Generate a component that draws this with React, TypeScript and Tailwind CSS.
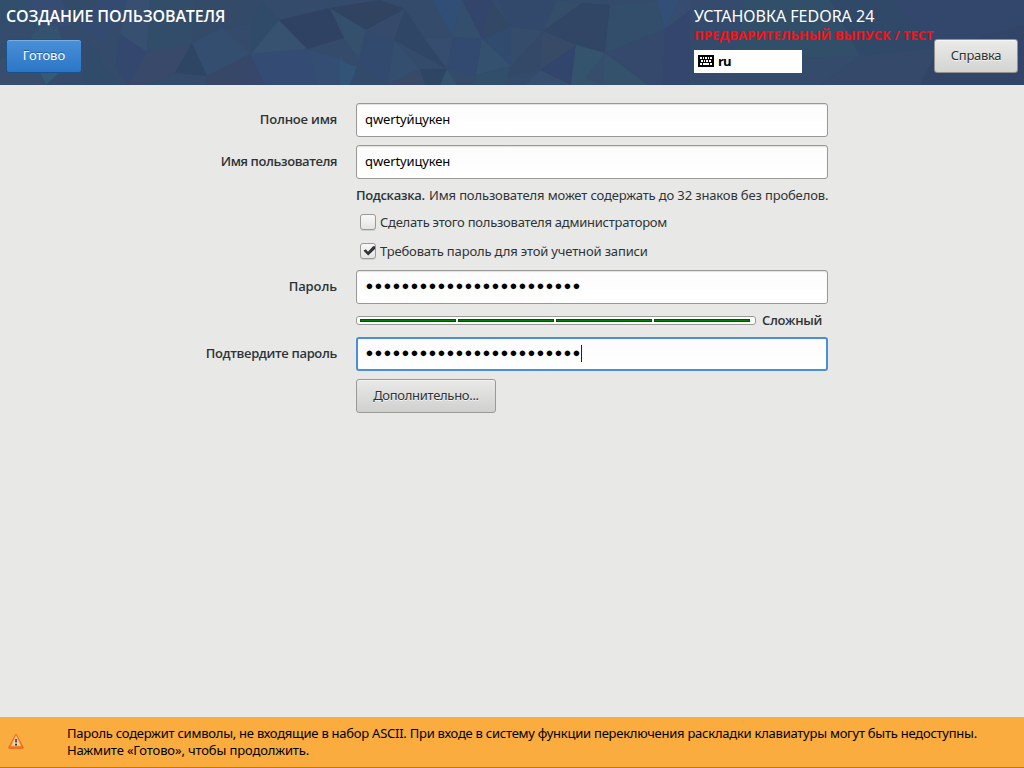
import type { ReactNode } from 'react';

// Facets of the low-poly header artwork: fill colour and polygon points.
const facets: [string, string][] = [
  ['#31506a', '0,0 28,0 40,28 0,18'],
  ['#374d74', '28,0 62,0 74,26 40,28'],
  ['#36556f', '28,28 57,25 62,40 38,52'],
  ['#344e6d', '0,18 40,28 0,60'],
  ['#394f6d', '0,60 40,40 45,85 0,85'],
  ['#345d77', '38,68 60,72 46,85'],
  ['#324c69', '62,0 100,0 74,26'],
  ['#354b73', '100,0 127,0 105,40 74,26'],
  ['#385071', '127,0 150,0 147,52 120,34'],
  ['#314c6a', '88,40 120,85 82,85'],
  ['#34476f', '120,34 147,52 128,85 115,68'],
  ['#324e6a', '150,0 195,0 192,43 147,52'],
  ['#39496a', '147,52 192,43 175,73 150,85 128,85'],
  ['#334b68', '195,0 262,0 250,23 192,43'],
  ['#2e4562', '192,43 207,76 175,73'],
  ['#344f72', '222,28 250,54 207,76 192,43'],
  ['#374768', '207,76 250,54 240,85 205,85'],
  ['#304c6a', '262,0 279,20 251,54 250,23'],
  ['#385471', '279,20 307,49 251,54'],
  ['#304162', '279,20 330,8 344,38 307,49'],
  ['#354d75', '251,54 307,49 317,85 265,85'],
  ['#37476b', '250,54 265,85 240,85'],
  ['#344e75', '307,49 346,60 350,85 317,85'],
  ['#36506c', '330,8 366,30 344,38'],
  ['#304260', '330,8 380,0 405,9 366,30'],
  ['#374c6d', '366,30 405,9 394,40'],
  ['#34516d', '340,15 366,30 360,60 344,38'],
  ['#334a70', '366,30 394,40 388,85 357,67'],
  ['#32567a', '340,61 357,67 350,85 340,85'],
  ['#334b6c', '357,67 388,85 350,85'],
  ['#354c6c', '405,9 433,0 424,38'],
  ['#304666', '405,9 424,38 447,69 394,40'],
  ['#334f70', '394,40 420,69 388,85'],
  ['#394a68', '416,70 427,85 388,85'],
  ['#2f4563', '420,69 447,69 440,85 425,85'],
  ['#304f78', '433,0 462,0 453,37'],
  ['#374e70', '424,38 453,37 447,69'],
  ['#35506f', '462,0 482,39 453,37'],
  ['#324a70', '453,37 482,39 476,75 447,69'],
  ['#365470', '447,69 457,85 440,85'],
  ['#34456d', '462,0 491,0 482,39'],
  ['#324864', '491,0 511,27 482,39'],
  ['#314b70', '482,39 511,27 511,66 476,75'],
  ['#355372', '482,39 511,66 476,75'],
  ['#314f6a', '476,75 511,66 507,85 475,85'],
  ['#374d6b', '511,27 543,31 511,66'],
  ['#33496b', '498,0 557,0 543,31 511,27'],
  ['#334967', '511,66 543,31 540,70 507,77'],
  ['#384c69', '543,31 576,45 540,70'],
  ['#344e69', '557,0 582,3 543,31'],
  ['#314464', '582,3 576,45 543,31'],
  ['#32456d', '540,70 576,45 571,85'],
  ['#374f70', '540,70 571,85 525,85'],
  ['#314665', '582,3 610,5 605,53 576,45'],
  ['#334f6b', '610,5 657,0 665,29 605,53'],
  ['#35566f', '576,45 605,53 603,85 571,85'],
  ['#374f6b', '605,53 603,85 585,78'],
  ['#35546d', '605,53 648,85 603,85'],
  ['#35496b', '605,53 665,29 663,85 648,85'],
  ['#33507a', '657,0 679,0 665,29'],
  ['#34466e', '665,29 690,10 690,85 663,85'],
  ['#384e70', '679,0 690,0 690,10 665,29'],
  ['#354b6e', '690,0 745,0 735,50 690,20'],
  ['#32506a', '745,0 830,0 860,56 735,60'],
  ['#334a6b', '690,20 735,60 700,85 690,85'],
  ['#344b6b', '735,60 860,56 820,85 700,85'],
  ['#314968', '830,0 890,0 938,48 860,56'],
  ['#33466b', '890,0 1024,0 1024,25 938,48'],
  ['#36496b', '860,56 938,48 920,85 820,85'],
  ['#324568', '938,48 1024,25 1024,85 920,85'],
];

function HeaderArt() {
  return (
    <svg className="absolute inset-0 h-full w-full" viewBox="0 0 1024 85" preserveAspectRatio="none" aria-hidden="true">
      <rect width="1024" height="85" fill="#344b6b" />
      <g opacity=".85">
        {facets.map(([fill, points]) => (
          <polygon key={points} points={points} fill={fill} />
        ))}
      </g>
    </svg>
  );
}

function KeyboardIcon() {
  return (
    <svg className="-mt-px" width="16" height="12" viewBox="0 0 16 12" shapeRendering="crispEdges" aria-hidden="true">
      <rect width="16" height="12" rx="1" fill="#000" />
      <path
        fill="#fff"
        d="M2 2h2v2H2zM5 2h1v2H5zM7 2h2v2H7zM10 2h1v2h-1zM12 2h2v2h-2zM3 5h2v2H3zM6 5h1v2H6zM8 5h2v2H8zM11 5h2v2h-2zM2 8h2v2H2zM5 8h6v2H5zM12 8h2v2h-2z"
      />
    </svg>
  );
}

function WarningIcon() {
  return (
    <svg className="-mt-0.5" width="16" height="16" viewBox="0 0 16 16" aria-hidden="true">
      <defs>
        <linearGradient id="warn" x1="0" y1="0" x2="0" y2="1">
          <stop offset="0" stopColor="#f7a860" />
          <stop offset="1" stopColor="#f07818" />
        </linearGradient>
      </defs>
      <path d="M8 1 15.3 14.4Q15.6 15.4 14.6 15.4H1.4Q.4 15.4.7 14.4Z" fill="url(#warn)" stroke="#e06c1a" strokeWidth=".9" strokeLinejoin="round" />
      <path d="M8 3.6 12.6 12.8H3.4Z" fill="#f3cfa8" stroke="#f9c795" strokeWidth=".5" />
      <path d="M7.1 6h1.9v3.6H7.1z" fill="#555" />
      <path d="M7.1 10.8h1.9v1.7H7.1z" fill="#333" />
    </svg>
  );
}

function Row({ label, spacing = '', children }: { label?: string; spacing?: string; children: ReactNode }) {
  return (
    <div className="flex items-center">
      <div className={`w-[337px] pb-0.5 text-right font-['Open_Sans',sans-serif] font-semibold whitespace-nowrap ${spacing}`}>{label}</div>
      <div className="ml-[19px] w-[472px]">{children}</div>
    </div>
  );
}

function Field({ focused, children }: { focused?: boolean; children: ReactNode }) {
  return (
    <div
      className={`flex h-[34px] items-center rounded-[3px] bg-linear-to-b from-[#fcfcfc] to-white pb-0.5 text-black ${
        focused ? 'border-2 border-[#4a90d9] px-[7px]' : 'border border-[#999a96] px-2 shadow-[inset_0_1px_1px_#e0e0dd]'
      }`}
    >
      {children}
    </div>
  );
}

function Dots() {
  return (
    <div className="flex pb-px text-[13px] leading-[17px]">
      {Array.from({ length: 24 }, (_, i) => (
        <span key={i} className="flex w-[9px] justify-center">●</span>
      ))}
    </div>
  );
}

function Check({ checked, spacing, children }: { checked?: boolean; spacing: string; children: ReactNode }) {
  return (
    <div className="flex h-4 items-center pl-1">
      <span className="flex size-4 items-center justify-center rounded-[3px] border border-[#999a96] bg-linear-to-b from-[#f8f8f8] to-[#e4e4e2] shadow-[0_1px_0_#d0d0cd]">
        {checked && (
          <svg width="14" height="14" viewBox="0 0 14 14" className="shrink-0" aria-hidden="true">
            <path d="M2.5 6.8 4.8 5.3 7 7.8 12 2.2 14 2.2 14 5 7.2 11.4Z" fill="#2e3436" />
          </svg>
        )}
      </span>
      <span className={`ml-1 whitespace-nowrap ${spacing}`}>{children}</span>
    </div>
  );
}

export default function App() {
  return (
    <div className="flex h-[768px] w-[1024px] flex-col overflow-hidden bg-[#e8e8e6] font-['Noto_Sans',sans-serif] text-[13px] leading-[17px] text-[#2e3436]">
      <header className="relative h-[85px] shrink-0">
        <HeaderArt />
        <div className="relative flex h-full pr-1.5 pl-1.5">
          <div className="flex w-[688px] flex-col items-start">
            <h1 className="mt-[5px] h-[23px] font-['Open_Sans',sans-serif] text-[16px] leading-[23px] font-semibold tracking-[-0.14px] whitespace-nowrap text-white">
              СОЗДАНИЕ ПОЛЬЗОВАТЕЛЯ
            </h1>
            <button className="mt-[11px] h-[34px] w-[76px] rounded-[3px] border border-[#1c5187] bg-linear-to-b from-[#4a90d9] to-[#2a76c6] pb-0.5 text-white shadow-[inset_0_1px_0_#76ade4] [text-shadow:0_-1px_0_#1f5c9c]">
              Готово
            </button>
          </div>
          <div className="flex w-[240px] flex-col items-start whitespace-nowrap">
            <div className="mt-[5px] h-[22px] text-[16px] leading-[23px] text-white">УСТАНОВКА FEDORA 24</div>
            <div className="h-[17px] font-['Open_Sans',sans-serif] text-[13px] leading-[17px] font-bold tracking-[0.03px] text-[#fa1010]">
              ПРЕДВАРИТЕЛЬНЫЙ ВЫПУСК / ТЕСТ
            </div>
            <div className="mt-1.5 flex h-[23px] w-[108px] items-center gap-1 bg-white px-1 text-black">
              <KeyboardIcon />
              <span className="font-['Open_Sans',sans-serif] font-bold tracking-[-0.9px]">ru</span>
            </div>
          </div>
          <button className="mt-[39px] h-[34px] w-[84px] rounded-[3px] border border-[#92938e] bg-linear-to-b from-[#ebebea] to-[#d3d3d1] pb-0.5 tracking-[-0.3px] shadow-[inset_0_1px_0_#f5f5f4] [text-shadow:0_1px_0_#f4f4f4]">
            Справка
          </button>
        </div>
      </header>

      <main className="flex flex-1 flex-col pt-[18px]">
        <Row label="Полное имя" spacing="tracking-[-0.2px]">
          <Field><span className="tracking-[-0.12px]">qwertyйцукен</span></Field>
        </Row>
        <div className="h-2" />
        <Row label="Имя пользователя" spacing="tracking-[-0.42px]">
          <Field><span className="tracking-[-0.12px]">qwertyицукен</span></Field>
        </Row>
        <div className="h-2" />
        <Row>
          <p className="whitespace-nowrap">
            <b className="inline-block w-[73px] font-['Open_Sans',sans-serif] font-semibold tracking-[-0.35px]">Подсказка.</b>
            <span className="tracking-[-0.14px]">Имя пользователя может содержать до 32 знаков без пробелов.</span>
          </p>
        </Row>
        <div className="h-2.5" />
        <Row>
          <Check spacing="tracking-[-0.25px]">Сделать этого пользователя администратором</Check>
        </Row>
        <div className="h-[13px]" />
        <Row>
          <Check checked spacing="tracking-[-0.15px]">Требовать пароль для этой учетной записи</Check>
        </Row>
        <div className="h-[11px]" />
        <Row label="Пароль" spacing="tracking-[-0.1px]">
          <Field><Dots /></Field>
        </Row>
        <Row>
          <div className="flex h-[33px] items-center">
            <div className="flex h-[9px] w-[400px] gap-[2px] rounded-[3px] border border-[#999a96] bg-white py-[2px] pr-[5px] pl-[3px]">
              {[0, 1, 2, 3].map((i) => (
                <div key={i} className="h-[3px] w-[96px] border border-[#0a4a0a] bg-[#008000]" />
              ))}
            </div>
            <span className="ml-1.5 font-['Open_Sans',sans-serif] font-semibold tracking-[-0.35px]">Сложный</span>
          </div>
        </Row>
        <Row label="Подтвердите пароль" spacing="tracking-[-0.35px]">
          <Field focused>
            <Dots />
            <div className="h-[17px] w-px bg-[#222]" />
          </Field>
        </Row>
        <div className="h-2" />
        <Row>
          <button className="block h-[34px] w-[140px] rounded-[3px] border border-[#999a96] bg-linear-to-b from-[#e9e9e8] to-[#d0d0ce] pb-0.5 tracking-[-0.3px] shadow-[inset_0_1px_0_#f3f3f2] [text-shadow:0_1px_0_#f4f4f4]">
            Дополнительно...
          </button>
        </Row>
      </main>

      <footer className="flex h-[51px] items-center border-b border-[#85827c] bg-[#faac3e] pl-2 text-black">
        <WarningIcon />
        <div className="ml-[43px] whitespace-nowrap">
          <p className="tracking-[-0.247px]">
            Пароль содержит символы, не входящие в набор ASCII. При входе в систему функции переключения раскладки клавиатуры могут быть недоступны.
          </p>
          <p className="tracking-[-0.14px]">Нажмите «Готово», чтобы продолжить.</p>
        </div>
      </footer>
    </div>
  );
}
